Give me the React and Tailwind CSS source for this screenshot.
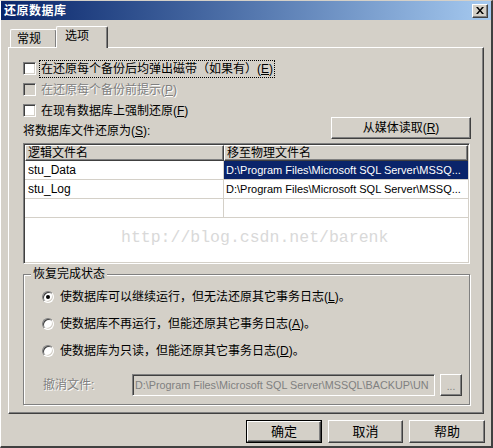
import React from "react";

const raised =
  "border border-t-white border-l-white border-r-[#404040] border-b-[#404040] shadow-[inset_-1px_-1px_0_#808080]";
const sunken =
  "border border-t-[#808080] border-l-[#808080] border-r-white border-b-white shadow-[inset_1px_1px_0_#404040,inset_-1px_-1px_0_#d4d0c8]";
const grayText = "text-[#808080] [text-shadow:1px_1px_0_#ffffff]";

const Checkbox = ({ disabled }) => (
  <span className={`w-[13px] h-[13px] shrink-0 ${sunken} ${disabled ? "bg-[#d4d0c8]" : "bg-white"}`} />
);

const Radio = ({ checked }) => (
  <span className="relative w-[12px] h-[12px] shrink-0 rounded-full bg-white border border-t-[#808080] border-l-[#808080] border-r-white border-b-white shadow-[inset_1px_1px_0_#404040,inset_-1px_-1px_0_#d4d0c8]">
    {checked && <span className="absolute left-[3px] top-[3px] w-[4px] h-[4px] rounded-full bg-black" />}
  </span>
);

const rows = [
  { name: "stu_Data", path: "D:\\Program Files\\Microsoft SQL Server\\MSSQ...", sel: true },
  { name: "stu_Log", path: "D:\\Program Files\\Microsoft SQL Server\\MSSQ...", sel: false },
  { name: "", path: "", sel: false },
];

const radios = [
  { text: "使数据库可以继续运行，但无法还原其它事务日志", key: "L", checked: true },
  { text: "使数据库不再运行，但能还原其它事务日志", key: "A", checked: false },
  { text: "使数据库为只读，但能还原其它事务日志", key: "D", checked: false },
];

export default function App() {
  return (
    <div className="w-[493px] h-[448px] flex flex-col bg-[#d4d0c8] border-l border-t border-l-white border-t-[#d4d0c8] border-r-2 border-b-2 border-r-[#404040] border-b-[#404040] font-['Liberation_Sans','Noto_Sans_CJK_SC',sans-serif] text-[12px] leading-[14px] text-black overflow-hidden">
      {/* title bar */}
      <div className="h-[19px] flex items-center justify-between pl-[3px] pr-[3px] bg-gradient-to-r from-[#0a246a] to-[#a6caf0]">
        <span className="text-white font-bold text-[12px] tracking-[0.5px]">还原数据库</span>
        <button className={`w-[16px] h-[14px] bg-[#d4d0c8] flex items-center justify-center ${raised}`}>
          <svg width="8" height="7" viewBox="0 0 8 7">
            <path d="M0 0h2l2 2.5L6 0h2L5 3.5 8 7H6L4 4.5 2 7H0l3-3.5z" fill="#000" />
          </svg>
        </button>
      </div>

      {/* tabs */}
      <div className="mt-[6px] ml-[7px] flex items-end h-[21px]">
        <div className="ml-[2px] w-[47px] h-[18px] flex items-center pl-[6px] border-l border-t border-white border-r border-r-[#404040] shadow-[inset_-1px_0_0_#808080] rounded-t-[2px]">
          常规
        </div>
        <div className="relative z-10 -ml-px -mb-px w-[52px] h-[22px] flex items-start pt-[2px] pl-[8px] bg-[#d4d0c8] border-l border-t border-white border-r border-r-[#404040] shadow-[inset_-1px_0_0_#808080] rounded-t-[2px]">
          选项
        </div>
      </div>

      {/* panel */}
      <div className="ml-[7px] w-[476px] h-[367px] flex flex-col pl-[14px] pr-[13px] pt-[10px] border-l border-t border-white border-r border-b border-r-[#404040] border-b-[#404040] shadow-[inset_-1px_-1px_0_#808080]">
        <div className="h-[21px] flex items-center">
          <Checkbox />
          <span className="ml-[3px] px-[2px] py-[2px] outline outline-1 outline-dotted outline-black -outline-offset-1">
            在还原每个备份后均弹出磁带（如果有）(<u>E</u>)
          </span>
        </div>
        <div className="h-[21px] flex items-center">
          <Checkbox disabled />
          <span className={`ml-[5px] ${grayText}`}>
            在还原每个备份前提示(<u>P</u>)
          </span>
        </div>
        <div className="h-[21px] flex items-center">
          <Checkbox />
          <span className="ml-[5px]">
            在现有数据库上强制还原(<u>F</u>)
          </span>
        </div>

        <div className="-mt-[4px] flex items-end justify-between">
          <span className="mb-[1px]">
            将数据库文件还原为(<u>S</u>):
          </span>
          <button className={`w-[140px] h-[22px] -mr-px bg-[#d4d0c8] ${raised}`}>
            从媒体读取(<u>R</u>)
          </button>
        </div>

        {/* file table */}
        <div className={`mt-[4px] h-[121px] flex flex-col bg-white p-px ${sunken}`}>
          <div className="flex h-[16px] bg-[#d4d0c8]">
            <div className={`w-[199px] pl-[2px] flex items-center ${raised}`}>逻辑文件名</div>
            <div className={`flex-1 pl-[2px] flex items-center ${raised}`}>移至物理文件名</div>
          </div>
          {rows.map((r, i) => (
            <div key={i} className="flex h-[19px] border-b border-[#d4d0c8]">
              <div className="w-[199px] pl-[3px] flex items-center border-r border-[#d4d0c8] text-[12px]">{r.name}</div>
              <div
                className={`flex-1 min-w-0 pl-[2px] flex items-center whitespace-nowrap overflow-hidden text-[11px] ${
                  r.sel ? "bg-[#0a246a] text-white" : ""
                }`}
              >
                {r.path}
              </div>
            </div>
          ))}
          <div className="flex-1 flex items-center pl-[96px] pb-[4px]">
            <span className="font-['Liberation_Mono',monospace] text-[16.5px] leading-none text-[#d9d9d9]">
              http://blog.csdn.net/barenk
            </span>
          </div>
        </div>

        {/* group box */}
        <div className="relative mt-[10px] h-[131px] border border-[#808080] shadow-[inset_1px_1px_0_#ffffff,1px_1px_0_#ffffff] pt-[8px]">
          <span className="absolute -top-[8px] left-[7px] px-[2px] bg-[#d4d0c8]">恢复完成状态</span>
          {radios.map((r) => (
            <div key={r.key} className="h-[27px] flex items-center pl-[18px]">
              <Radio checked={r.checked} />
              <span className="ml-[6px]">
                {r.text}(<u>{r.key}</u>)。
              </span>
            </div>
          ))}
          <div className="mt-[10px] flex items-center pl-[19px]">
            <span className={`w-[89px] ${grayText}`}>撤消文件:</span>
            <div className={`w-[303px] h-[22px] min-w-0 flex items-center pl-[2px] whitespace-nowrap overflow-hidden bg-[#d4d0c8] ${sunken} text-[#808080] text-[10.8px]`}>
              D:\Program Files\Microsoft SQL Server\MSSQL\BACKUP\UN
            </div>
            <button className={`ml-[5px] w-[22px] h-[22px] bg-[#d4d0c8] text-[#808080] text-[10px] leading-none pt-[4px] ${raised}`}>
              ...
            </button>
          </div>
        </div>
      </div>

      {/* bottom buttons */}
      <div className="mt-[6px] flex justify-end gap-[6px] pr-[6px]">
        <button className="w-[76px] h-[23px] border border-black">
          <span className={`block w-full h-full bg-[#d4d0c8] flex items-center justify-center text-[13px] ${raised}`}>确定</span>
        </button>
        <button className={`w-[75px] h-[23px] bg-[#d4d0c8] text-[13px] ${raised}`}>取消</button>
        <button className={`w-[76px] h-[23px] bg-[#d4d0c8] text-[13px] ${raised}`}>帮助</button>
      </div>
    </div>
  );
}
